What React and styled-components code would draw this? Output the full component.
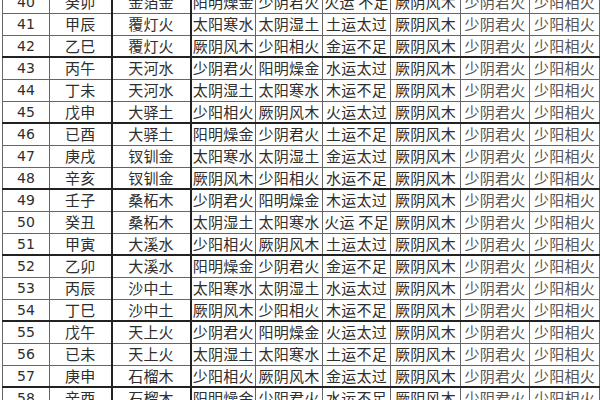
import React from 'react'
import styled, { createGlobalStyle } from 'styled-components'

const GlobalStyle = createGlobalStyle`
    html, body {
        margin: 0;
        padding: 0;
        background: #fff;
    }
    body {
        width: 600px;
        height: 400px;
        overflow: hidden;
        font-family: "Noto Sans CJK SC", "Noto Sans", sans-serif;
    }
`

const Frame = styled.div`
    width: 600px;
    height: 400px;
    overflow: hidden;
    padding-left: 2px;
    box-sizing: border-box;
`

const Table = styled.table`
    margin-top: -9px;
    width: 597px;
    table-layout: fixed;
    border-collapse: collapse;
    color: #2e2e2e;
`

const Row = styled.tr`
    height: 22px;
    border-bottom: ${props => props.group ? '2px solid #222' : '1px solid #666'};
`

const Cell = styled.td`
    padding: 0;
    border-left: ${props => props.heavy ? '2px solid #222' : '1px solid #666'};
    border-right: 1px solid #666;
    text-align: center;
    vertical-align: middle;
    font-size: ${props => props.num ? '14px' : '15px'};
    line-height: 20px;
    white-space: nowrap;
    overflow: hidden;
    color: ${props => props.light ? '#555' : '#2e2e2e'};
    font-family: ${props => props.num ? '"DejaVu Sans", "Noto Sans", sans-serif' : '"Noto Sans CJK SC", sans-serif'};
    letter-spacing: ${props => props.num ? '0' : '0.2px'};
`

const widths = [47, 62, 79, 65, 67, 68, 70, 69, 70]

const rows = [
    ['40', '癸卯', '金箔金', '阳明燥金', '少阴君火', '火运 不足'],
    ['41', '甲辰', '覆灯火', '太阳寒水', '太阴湿土', '土运太过'],
    ['42', '乙巳', '覆灯火', '厥阴风木', '少阳相火', '金运不足'],
    ['43', '丙午', '天河水', '少阴君火', '阳明燥金', '水运太过'],
    ['44', '丁未', '天河水', '太阴湿土', '太阳寒水', '木运不足'],
    ['45', '戊申', '大驿土', '少阳相火', '厥阴风木', '火运太过'],
    ['46', '已酉', '大驿土', '阳明燥金', '少阴君火', '土运不足'],
    ['47', '庚戌', '钗钏金', '太阳寒水', '太阴湿土', '金运太过'],
    ['48', '辛亥', '钗钏金', '厥阴风木', '少阳相火', '水运不足'],
    ['49', '壬子', '桑柘木', '少阴君火', '阳明燥金', '木运太过'],
    ['50', '癸丑', '桑柘木', '太阴湿土', '太阳寒水', '火运 不足'],
    ['51', '甲寅', '大溪水', '少阳相火', '厥阴风木', '土运太过'],
    ['52', '乙卯', '大溪水', '阳明燥金', '少阴君火', '金运不足'],
    ['53', '丙辰', '沙中土', '太阳寒水', '太阴湿土', '水运太过'],
    ['54', '丁巳', '沙中土', '厥阴风木', '少阳相火', '木运不足'],
    ['55', '戊午', '天上火', '少阴君火', '阳明燥金', '火运太过'],
    ['56', '已未', '天上火', '太阴湿土', '太阳寒水', '土运不足'],
    ['57', '庚申', '石榴木', '少阳相火', '厥阴风木', '金运太过'],
    ['58', '辛酉', '石榴木', '阳明燥金', '少阴君火', '水运不足'],
]

const tail = ['厥阴风木', '少阴君火', '少阳相火']

export default function App() {
    return (
        <Frame>
            <GlobalStyle />
            <Table>
                <colgroup>
                    {widths.map((w, i) => <col key={i} style={{ width: w }} />)}
                </colgroup>
                <tbody>
                    {rows.map((r, i) => {
                        const cells = [...r, ...tail]
                        return (
                            <Row key={r[0]} group={(Number(r[0]) % 3) === 0}>
                                {cells.map((c, j) => (
                                    <Cell
                                        key={j}
                                        num={j === 0}
                                        heavy={j === 2 || j === 3}
                                        light={j >= 7}
                                    >
                                        {c}
                                    </Cell>
                                ))}
                            </Row>
                        )
                    })}
                </tbody>
            </Table>
        </Frame>
    )
}
